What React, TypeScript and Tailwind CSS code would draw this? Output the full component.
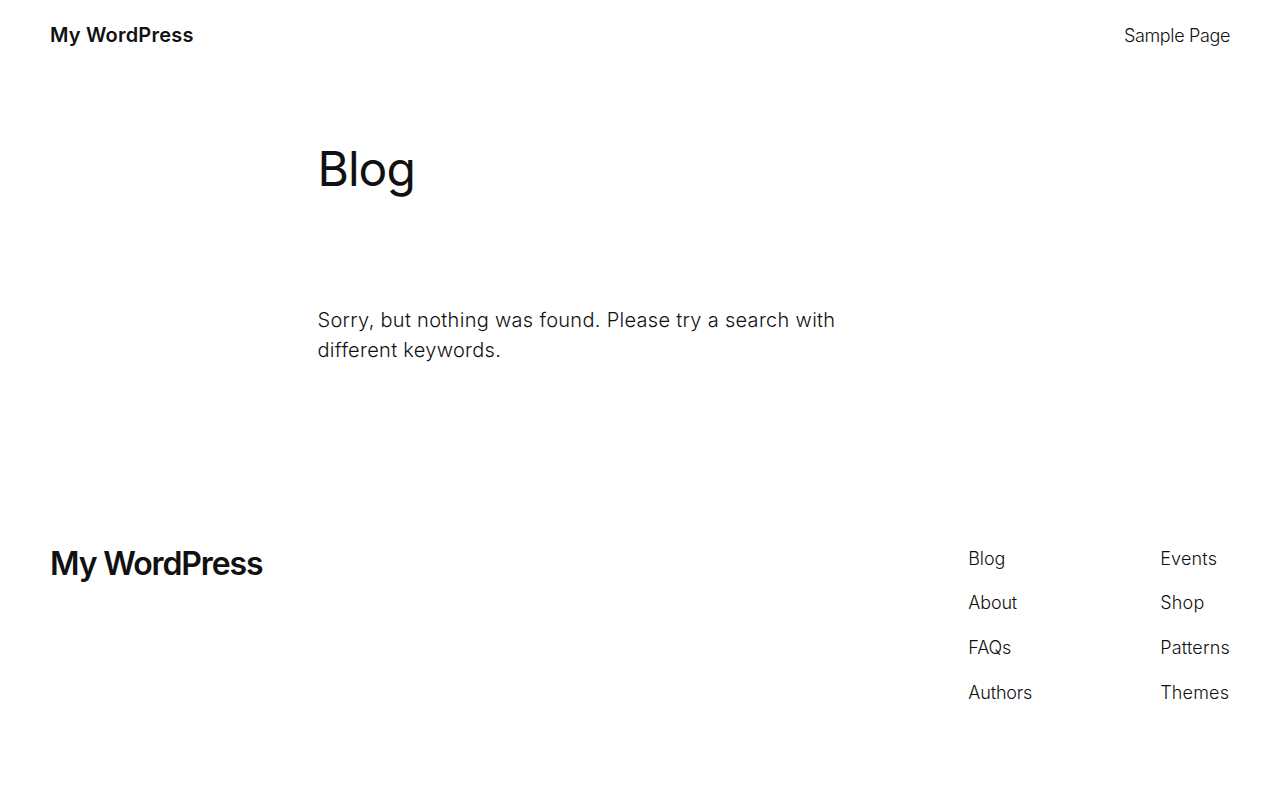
export default function App() {
  const colA = ["Blog", "About", "FAQs", "Authors"]
  const colB = ["Events", "Shop", "Patterns", "Themes"]

  return (
    <div className="min-h-[800px] bg-white text-[#111111] font-['Inter','Liberation_Sans',sans-serif] font-light">
      {/* Header */}
      <header className="flex h-[70px] items-center justify-between px-[50px]">
        <a className="text-[20px] font-semibold tracking-[0.01em]">My WordPress</a>
        <nav>
          <a className="text-[18px] tracking-[-0.02em]">Sample Page</a>
        </nav>
      </header>

      {/* Main */}
      <main className="mx-auto w-[645px] pt-[73px]">
        <h1 className="text-[48px] font-normal leading-[1.1] tracking-[-0.02em]">Blog</h1>
        <p className="mt-[109px] w-[560px] text-[20px] leading-[30px] tracking-[0.015em]">
          Sorry, but nothing was found. Please try a search with different keywords.
        </p>
      </main>

      {/* Footer */}
      <footer className="mt-[180px] flex justify-between px-[50px]">
        <div className="pt-[3px] text-[32px] font-semibold leading-none tracking-[-0.035em]">My WordPress</div>
        <div className="flex gap-[128px]">
          <ul className="flex flex-col gap-[17.7px]">
            {colA.map((l) => (
              <li key={l} className="text-[18px] leading-[27px] tracking-[-0.01em]">{l}</li>
            ))}
          </ul>
          <ul className="flex flex-col gap-[17.7px]">
            {colB.map((l) => (
              <li key={l} className="text-[18px] leading-[27px] tracking-[0.01em]">{l}</li>
            ))}
          </ul>
        </div>
      </footer>
    </div>
  )
}
